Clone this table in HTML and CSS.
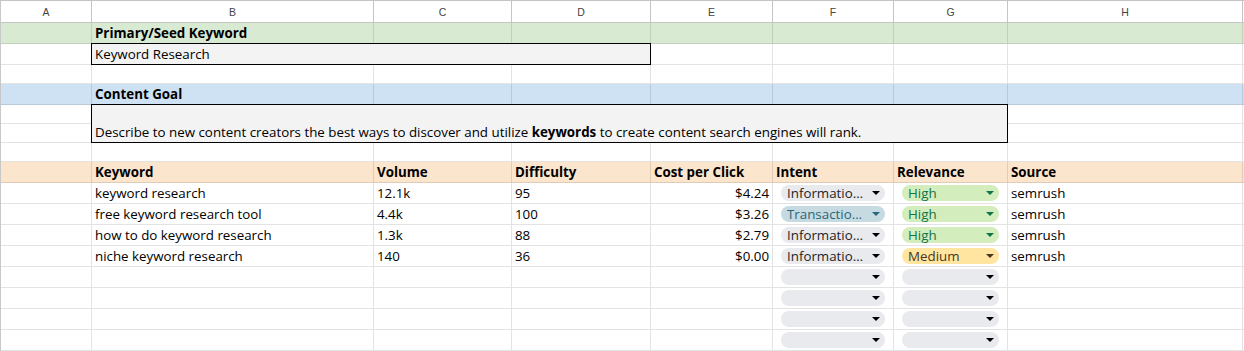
FILE: index.html
```html
<!DOCTYPE html>
<html>
<head>
<meta charset="utf-8">
<link rel="stylesheet" href="styles.css">
</head>
<body>
<div class="sheet">
  <div class="c h">A</div><div class="c h">B</div><div class="c h">C</div><div class="c h">D</div><div class="c h">E</div><div class="c h">F</div><div class="c h">G</div><div class="c h">H</div><div class="c h e"></div>

  <div class="c g"></div><div class="c g b">Primary/Seed Keyword</div><div class="c g"></div><div class="c g"></div><div class="c g"></div><div class="c g"></div><div class="c g"></div><div class="c g"></div><div class="c g e"></div>

  <div class="c"></div><div class="c box seed">Keyword Research</div><div class="c"></div><div class="c"></div><div class="c"></div><div class="c"></div><div class="c e"></div>

  <div class="c"></div><div class="c"></div><div class="c"></div><div class="c"></div><div class="c"></div><div class="c"></div><div class="c"></div><div class="c"></div><div class="c e"></div>

  <div class="c bl"></div><div class="c bl b">Content Goal</div><div class="c bl"></div><div class="c bl"></div><div class="c bl"></div><div class="c bl"></div><div class="c bl"></div><div class="c bl"></div><div class="c bl e"></div>

  <div class="c"></div><div class="c box goal">Describe to new content creators the best ways to discover and utilize&nbsp;<b>keywords</b>&nbsp;to create content search engines will rank.</div><div class="c"></div><div class="c e"></div>
  <div class="c"></div><div class="c"></div><div class="c e"></div>

  <div class="c"></div><div class="c"></div><div class="c"></div><div class="c"></div><div class="c"></div><div class="c"></div><div class="c"></div><div class="c"></div><div class="c e"></div>

  <div class="c o"></div><div class="c o b">Keyword</div><div class="c o b">Volume</div><div class="c o b">Difficulty</div><div class="c o b">Cost per Click</div><div class="c o b">Intent</div><div class="c o b">Relevance</div><div class="c o b">Source</div><div class="c o e"></div>

  <div class="c"></div><div class="c">keyword research</div><div class="c">12.1k</div><div class="c">95</div><div class="c r">$4.24</div>
  <div class="c f"><span class="chip gray">Informatio…<i class="ar"></i></span></div>
  <div class="c f"><span class="chip high">High<i class="ar"></i></span></div>
  <div class="c">semrush</div><div class="c e"></div>

  <div class="c"></div><div class="c">free keyword research tool</div><div class="c">4.4k</div><div class="c">100</div><div class="c r">$3.26</div>
  <div class="c f"><span class="chip trans">Transactio…<i class="ar"></i></span></div>
  <div class="c f"><span class="chip high">High<i class="ar"></i></span></div>
  <div class="c">semrush</div><div class="c e"></div>

  <div class="c"></div><div class="c">how to do keyword research</div><div class="c">1.3k</div><div class="c">88</div><div class="c r">$2.79</div>
  <div class="c f"><span class="chip gray">Informatio…<i class="ar"></i></span></div>
  <div class="c f"><span class="chip high">High<i class="ar"></i></span></div>
  <div class="c">semrush</div><div class="c e"></div>

  <div class="c"></div><div class="c">niche keyword research</div><div class="c">140</div><div class="c">36</div><div class="c r">$0.00</div>
  <div class="c f"><span class="chip gray">Informatio…<i class="ar"></i></span></div>
  <div class="c f"><span class="chip med">Medium<i class="ar"></i></span></div>
  <div class="c">semrush</div><div class="c e"></div>

  <div class="c"></div><div class="c"></div><div class="c"></div><div class="c"></div><div class="c"></div>
  <div class="c f"><span class="chip gray"><i class="ar"></i></span></div>
  <div class="c f"><span class="chip gray"><i class="ar"></i></span></div>
  <div class="c"></div><div class="c e"></div>

  <div class="c"></div><div class="c"></div><div class="c"></div><div class="c"></div><div class="c"></div>
  <div class="c f"><span class="chip gray"><i class="ar"></i></span></div>
  <div class="c f"><span class="chip gray"><i class="ar"></i></span></div>
  <div class="c"></div><div class="c e"></div>

  <div class="c"></div><div class="c"></div><div class="c"></div><div class="c"></div><div class="c"></div>
  <div class="c f"><span class="chip gray"><i class="ar"></i></span></div>
  <div class="c f"><span class="chip gray"><i class="ar"></i></span></div>
  <div class="c"></div><div class="c e"></div>

  <div class="c"></div><div class="c"></div><div class="c"></div><div class="c"></div><div class="c"></div>
  <div class="c f"><span class="chip gray"><i class="ar"></i></span></div>
  <div class="c f"><span class="chip gray"><i class="ar"></i></span></div>
  <div class="c"></div><div class="c e"></div>
</div>
</body>
</html>
```

FILE: styles.css
```css
* { box-sizing: border-box; margin: 0; padding: 0; }
html, body { margin: 0; background: #fff; }
body {
  font-family: "Open Sans", "Noto Sans", sans-serif;
  font-size: 13.333px;
  color: #000;
  overflow: hidden;
}
.sheet {
  display: grid;
  grid-template-columns: 91px 282px 138px 139px 122px 121px 114px 235px 1px;
  grid-template-rows: 22px 21px 21px 19px 21px 19px 19px 19px 21px repeat(8, 21px);
  width: 1244px;
  height: 351px;
  border-top: 1px solid #c4c4c4;
  border-left: 1px solid #c8c8c8;
}
.c {
  border-right: 1px solid rgba(0, 0, 0, 0.11);
  border-bottom: 1px solid rgba(0, 0, 0, 0.11);
  padding: 0 3px;
  line-height: 20px;
  white-space: nowrap;
  overflow: hidden;
  display: flex;
  align-items: flex-end;
  min-width: 0;
}
.c.e { border-right: none; padding: 0; }
.h {
  border-color: #c4c4c4;
  font-family: "Liberation Sans", Arial, sans-serif;
  font-size: 10.5px;
  color: #444;
  justify-content: center;
  align-items: center;
  line-height: 12px;
}
.h.e { border-right: none; }
.g { background: #d9ead3; }
.bl { background: #cfe2f3; }
.o { background: #fce5cd; }
.b { font-weight: 700; }
.r { justify-content: flex-end; }
.box {
  margin: -1px 0 0 -1px;
  border: 1px solid #000;
  background: #f3f3f3;
  position: relative;
  z-index: 1;
  overflow: visible;
}
.seed { grid-column: span 3; }
.goal { grid-column: 2 / span 6; grid-row: 6 / span 2; }
.goal b { font-weight: 700; }
.f { padding: 2px 8px; align-items: stretch; }
.chip {
  flex: 1;
  min-width: 0;
  height: 16px;
  border-radius: 8px;
  display: flex;
  align-items: center;
  justify-content: space-between;
  padding: 0 5px 0 6px;
  line-height: 16px;
  white-space: nowrap;
}
.chip .ar {
  margin-left: auto;
  width: 0;
  height: 0;
  border-left: 4px solid transparent;
  border-right: 4px solid transparent;
  border-top: 4px solid currentColor;
}
.gray { background: #e8eaed; color: #1f1f1f; }
.gray .ar { border-top-color: #000; }
.trans { background: #c6dbe1; color: #2a6579; }
.high { background: #d4edbc; color: #11734b; }
.med { background: #ffe5a0; color: #473821; }
```
